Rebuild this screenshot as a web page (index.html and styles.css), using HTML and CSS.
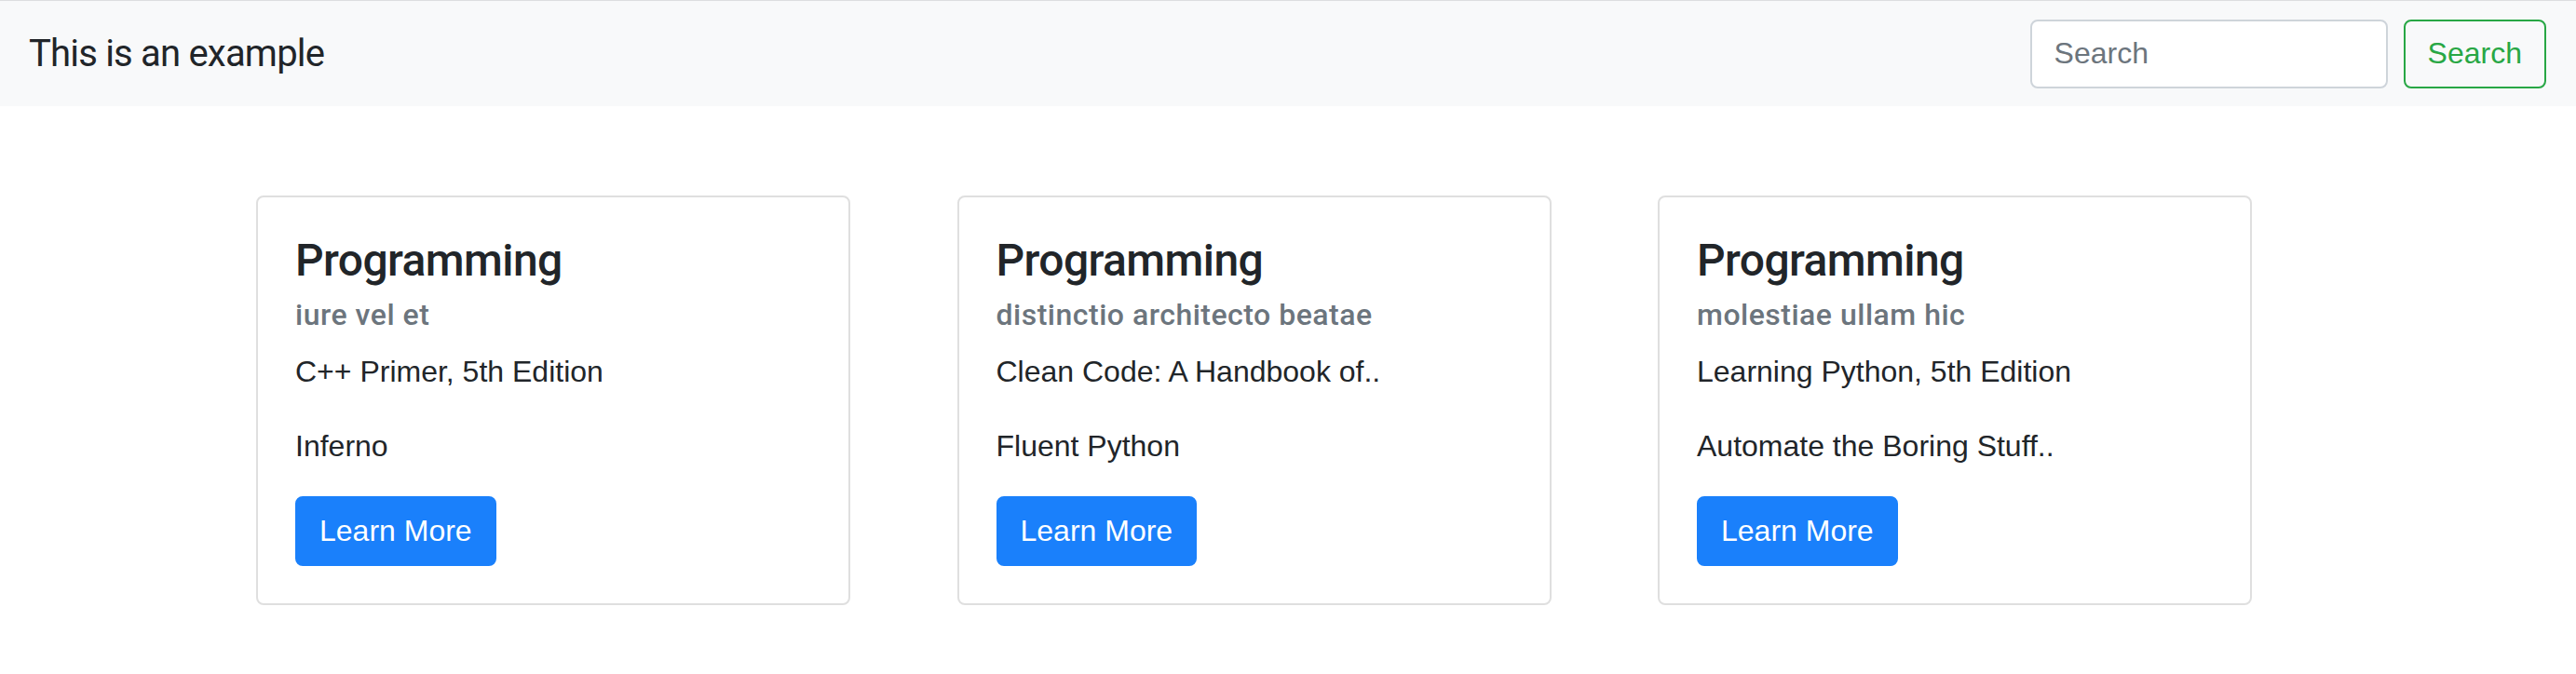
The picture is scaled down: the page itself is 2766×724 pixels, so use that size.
FILE: index.html
```html
<!DOCTYPE html>
<html lang="en">
<head>
<meta charset="utf-8">
<title>This is an example</title>
<link rel="stylesheet" href="styles.css">
</head>
<body>
<nav class="navbar">
  <a class="brand" href="#">This is an example</a>
  <form class="search-form">
    <input class="search-input" type="search" placeholder="Search" aria-label="Search">
    <button class="search-btn" type="button">Search</button>
  </form>
</nav>
<main class="cards">
  <div class="card">
    <h4 class="card-title">Programming</h4>
    <h6 class="card-subtitle">iure vel et</h6>
    <p class="card-text">C++ Primer, 5th Edition</p>
    <p class="card-text">Inferno</p>
    <a href="#" class="btn-primary">Learn More</a>
  </div>
  <div class="card">
    <h4 class="card-title">Programming</h4>
    <h6 class="card-subtitle">distinctio architecto beatae</h6>
    <p class="card-text">Clean Code: A Handbook of..</p>
    <p class="card-text">Fluent Python</p>
    <a href="#" class="btn-primary">Learn More</a>
  </div>
  <div class="card">
    <h4 class="card-title">Programming</h4>
    <h6 class="card-subtitle">molestiae ullam hic</h6>
    <p class="card-text">Learning Python, 5th Edition</p>
    <p class="card-text">Automate the Boring Stuff..</p>
    <a href="#" class="btn-primary">Learn More</a>
  </div>
</main>
</body>
</html>
```

FILE: styles.css
```css
* { box-sizing: border-box; }

body {
  margin: 0;
  background: #fff;
  color: #212529;
  font-family: "Liberation Sans", Arial, sans-serif;
  font-size: 32px;
}

.navbar {
  display: flex;
  align-items: center;
  justify-content: space-between;
  height: 114px;
  padding: 0 32px 0 31px;
  border-top: 1px solid #dcdde0;
  background: #f8f9fa;
}

.brand {
  font-family: Roboto, "Liberation Sans", sans-serif;
  font-size: 40px;
  line-height: 60px;
  letter-spacing: -0.8px;
  color: #212529;
  text-decoration: none;
}

.search-form {
  display: flex;
  align-items: center;
  gap: 17px;
}

.search-input {
  width: 384px;
  height: 74px;
  padding: 0 24px;
  border: 2px solid #ced4da;
  border-radius: 8px;
  background: #fff;
  color: #495057;
  font-family: "Liberation Sans", Arial, sans-serif;
  font-size: 32px;
  outline: none;
}

.search-input::placeholder { color: #6c757d; opacity: 1; }

.search-btn {
  height: 74px;
  padding: 0 24px;
  border: 2px solid #28a745;
  border-radius: 8px;
  background: transparent;
  color: #28a745;
  font-family: "Liberation Sans", Arial, sans-serif;
  font-size: 32px;
  cursor: pointer;
}

.cards {
  display: grid;
  grid-template-columns: repeat(3, 638px);
  column-gap: 114.5px;
  padding: 96px 0 0 275px;
}

.card {
  display: flex;
  flex-direction: column;
  align-items: flex-start;
  padding: 40px;
  border: 2px solid #dfdfdf;
  border-radius: 8px;
  background: #fff;
}

.card-title {
  margin: 0 0 11px;
  font-family: Roboto, "Liberation Sans", sans-serif;
  font-weight: 500;
  font-size: 48px;
  line-height: 56px;
  letter-spacing: -0.6px;
  color: #212529;
}

.card-subtitle {
  margin: 0 0 18px;
  font-family: Roboto, "Liberation Sans", sans-serif;
  font-weight: 500;
  font-size: 32px;
  line-height: 38px;
  letter-spacing: 0.5px;
  color: #6c757d;
}

.card-text {
  margin: 0 0 32px;
  line-height: 48px;
}

.card-text + .card-text { margin-bottom: 30px; }

.btn-primary {
  display: inline-flex;
  align-items: center;
  height: 75px;
  padding: 0 24px;
  border: 2px solid #1a80fb;
  border-radius: 8px;
  background: #1a80fb;
  color: #fff;
  font-size: 32px;
  text-decoration: none;
}
```
